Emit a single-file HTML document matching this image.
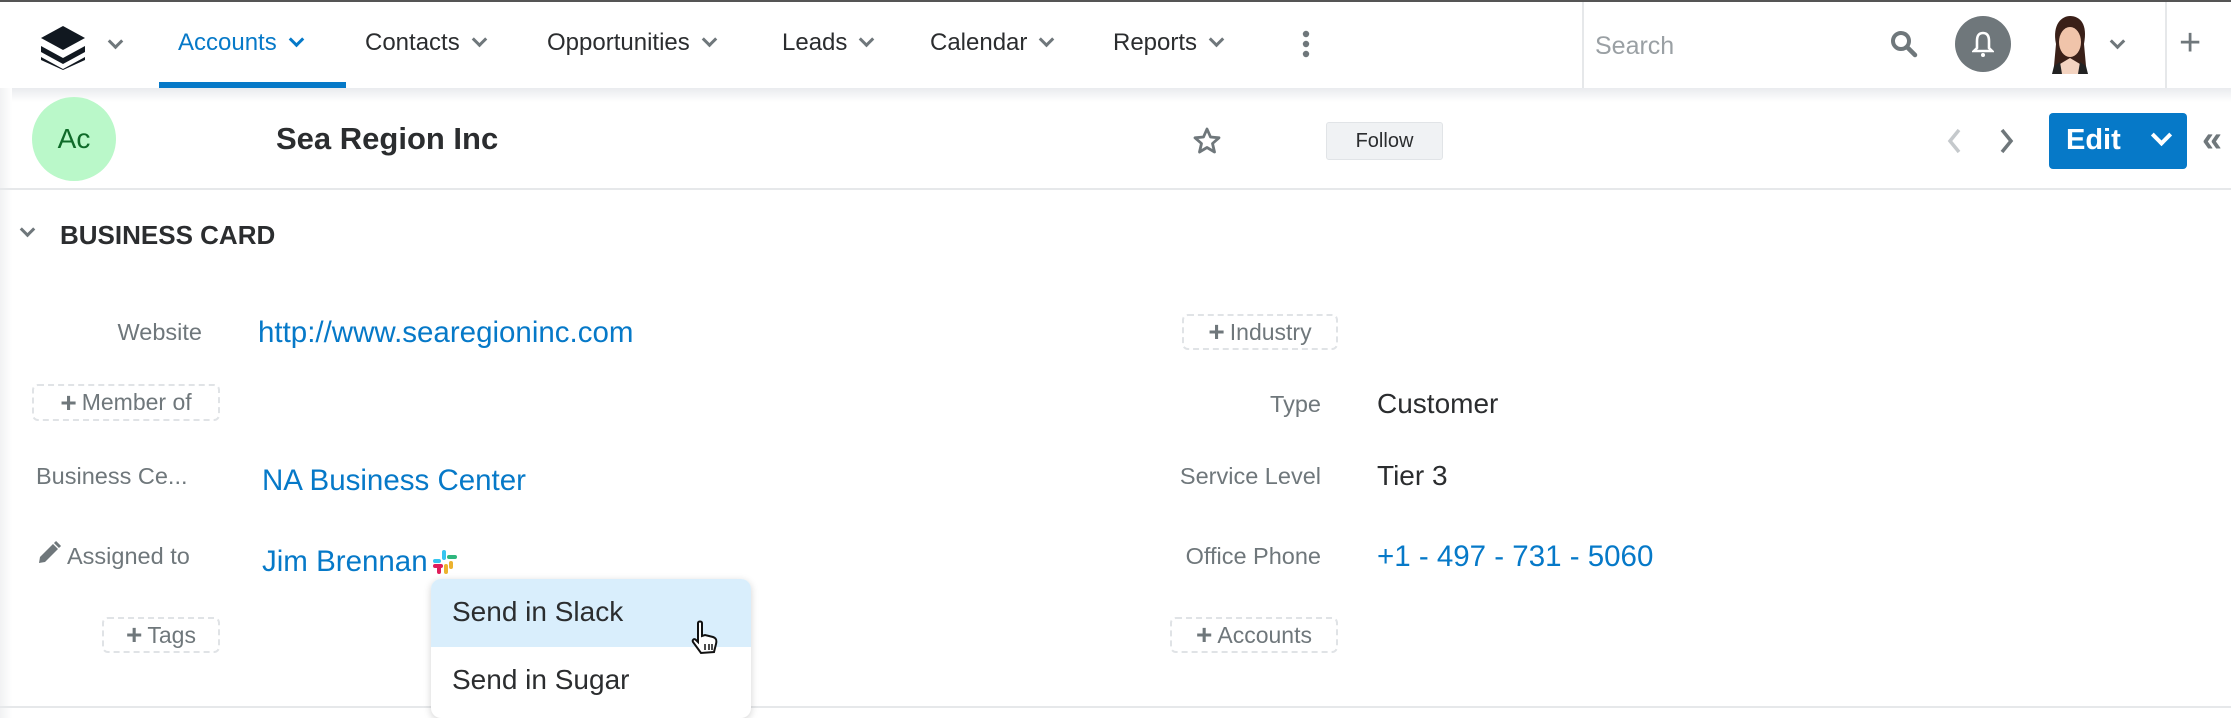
<!DOCTYPE html>
<html><head><meta charset="utf-8"><style>
*{margin:0;padding:0;box-sizing:border-box}
body{width:2231px;height:718px;overflow:hidden;background:#fff;font-family:"Liberation Sans",sans-serif;position:relative}
.a{position:absolute;white-space:nowrap}
.nav{font-size:24px;color:#2b2d2f;top:29px}
.chev{display:inline-block;width:11px;height:11px;border-right:3px solid #6f777b;border-bottom:3px solid #6f777b;transform:rotate(45deg);margin-left:14px;position:relative;top:-5px}
.chev.a{position:absolute;margin:0}
.lbl{font-size:23.5px;color:#6f777b;text-align:right}
.val{font-size:28px;color:#2b2d2f}
.lnk{font-size:29.5px;color:#0679c8}
.dash{border:2px dashed #e0e3e6;border-radius:6px;font-size:23px;color:#6f777b;display:flex;align-items:center;justify-content:center}
.dash b{font-size:28px;margin-right:5px;font-weight:bold}
</style></head><body>
<div class="a" style="left:0;top:0;width:2231px;height:2px;background:#555"></div>
<div class="a" style="left:0;top:88px;width:2231px;height:14px;background:linear-gradient(#e9ebee,#fff)"></div>
<div class="a" style="left:0;top:88px;width:12px;height:630px;background:linear-gradient(90deg,#f1f2f3,#fff)"></div>
<!-- logo -->
<svg class="a" style="left:38px;top:24px" width="50" height="46" viewBox="0 0 50 46"><path d="M25 2 L47 14 L25 26 L3 14Z" fill="#111820"/><path d="M3 22 L25 34 L47 22 L47 28 L25 40 L3 28Z" fill="#111820"/><path d="M3 33 L25 45 L47 33 L47 36 L25 46 L3 36Z" fill="#111820"/></svg>
<span class="a chev" style="left:110px;top:36px"></span>
<div class="a nav" style="left:178px;color:#0679c8">Accounts<span class="chev" style="border-color:#0679c8"></span></div>
<div class="a" style="left:159px;top:82px;width:187px;height:6px;background:#0679c8"></div>
<div class="a nav" style="left:365px">Contacts<span class="chev"></span></div>
<div class="a nav" style="left:547px">Opportunities<span class="chev"></span></div>
<div class="a nav" style="left:782px">Leads<span class="chev"></span></div>
<div class="a nav" style="left:930px">Calendar<span class="chev"></span></div>
<div class="a nav" style="left:1113px">Reports<span class="chev"></span></div>
<svg class="a" style="left:1300px;top:30px" width="12" height="28"><circle cx="6" cy="4" r="3.2" fill="#6f777b"/><circle cx="6" cy="14" r="3.2" fill="#6f777b"/><circle cx="6" cy="24" r="3.2" fill="#6f777b"/></svg>
<div class="a" style="left:1582px;top:2px;width:2px;height:86px;background:#e6e8ea"></div>
<div class="a" style="left:1595px;top:32px;font-size:25px;color:#9aa0a4">Search</div>
<svg class="a" style="left:1890px;top:30px" width="28" height="28" viewBox="0 0 28 28"><circle cx="11" cy="11" r="8" fill="none" stroke="#6f777b" stroke-width="4"/><path d="M17 17 L25 25" stroke="#6f777b" stroke-width="4.5" stroke-linecap="round"/></svg>
<div class="a" style="left:1955px;top:16px;width:56px;height:56px;border-radius:50%;background:#6f777b"></div>
<svg class="a" style="left:1972px;top:30px" width="22" height="28" viewBox="0 0 22 28"><path d="M11 3 C6 3 5 7 5 11 L5 18 L2 21 L20 21 L17 18 L17 11 C17 7 16 3 11 3Z" fill="none" stroke="#fff" stroke-width="2.6"/><circle cx="11" cy="25" r="2" fill="#fff"/></svg>
<svg class="a" style="left:2046px;top:14px" width="48" height="60" viewBox="0 0 48 60"><path d="M10 30 C6 10 16 2 24 2 C34 2 42 10 38 30 L40 52 L8 52Z" fill="#3a2018"/><ellipse cx="24" cy="28" rx="11" ry="15" fill="#f0c4aa"/><path d="M14 50 L24 44 L34 50 L36 60 L12 60Z" fill="#f3d3c0"/><path d="M8 52 L14 48 L16 60 L6 60Z M40 52 L34 48 L32 60 L42 60Z" fill="#222"/></svg>
<span class="a chev" style="left:2112px;top:36px"></span>
<div class="a" style="left:2165px;top:2px;width:2px;height:86px;background:#e6e8ea"></div>
<div class="a" style="left:2179px;top:22px;font-size:38px;color:#6f777b">+</div>
<!-- header -->
<div class="a" style="left:32px;top:97px;width:84px;height:84px;border-radius:50%;background:#baf8c9;color:#0f6b29;font-size:28px;line-height:84px;text-align:center">Ac</div>
<div class="a" style="left:276px;top:121px;font-size:31px;font-weight:bold;color:#2b2d2f">Sea Region Inc</div>
<svg class="a" style="left:1192px;top:126px" width="30" height="30" viewBox="0 0 30 30"><path d="M15 3 L18.5 11 L27 11.8 L20.5 17.5 L22.5 26 L15 21.5 L7.5 26 L9.5 17.5 L3 11.8 L11.5 11Z" fill="none" stroke="#6f777b" stroke-width="2.8" stroke-linejoin="round"/></svg>
<div class="a" style="left:1326px;top:122px;width:117px;height:38px;background:#f0f2f4;border:1px solid #e1e4e7;border-radius:3px;font-size:20px;color:#2b2d2f;text-align:center;line-height:36px">Follow</div>
<svg class="a" style="left:1944px;top:126px" width="20" height="30"><path d="M15 4 L6 15 L15 26" fill="none" stroke="#c5c9cc" stroke-width="3.5"/></svg>
<svg class="a" style="left:1997px;top:126px" width="20" height="30"><path d="M5 4 L14 15 L5 26" fill="none" stroke="#6f777b" stroke-width="3.5"/></svg>
<div class="a" style="left:2049px;top:113px;width:138px;height:56px;background:#0679c8;border-radius:4px"></div>
<div class="a" style="left:2066px;top:124px;font-size:29px;font-weight:bold;color:#fff">Edit</div>
<span class="a chev" style="left:2154px;top:128px;border-color:#fff;border-width:4px;width:15px;height:15px"></span>
<div class="a" style="left:2202px;top:118px;font-size:36px;font-weight:bold;color:#6f777b">«</div>
<div class="a" style="left:0;top:188px;width:2231px;height:2px;background:#e6e8ea"></div>
<!-- business card -->
<span class="a chev" style="left:22px;top:224px;width:11px;height:11px"></span>
<div class="a" style="left:60px;top:220px;font-size:26px;font-weight:bold;color:#2b2d2f">BUSINESS CARD</div>
<div class="a lbl" style="right:2029px;top:319px">Website</div>
<div class="a lnk" style="left:258px;top:316px">http://www.searegioninc.com</div>
<div class="a dash" style="left:1182px;top:314px;width:156px;height:36px"><b>+</b>Industry</div>
<div class="a dash" style="left:32px;top:384px;width:188px;height:37px"><b>+</b>Member of</div>
<div class="a lbl" style="right:910px;top:391px">Type</div>
<div class="a val" style="left:1377px;top:388px">Customer</div>
<div class="a lbl" style="left:36px;top:463px">Business Ce...</div>
<div class="a lnk" style="left:262px;top:464px">NA Business Center</div>
<div class="a lbl" style="right:910px;top:463px">Service Level</div>
<div class="a val" style="left:1377px;top:460px">Tier 3</div>
<svg class="a" style="left:36px;top:540px" width="26" height="26" viewBox="0 0 26 26"><path d="M3 23 L4 17 L17 4 L22 9 L9 22Z" fill="#6f777b"/><path d="M19 2 L24 7" stroke="#6f777b" stroke-width="3"/></svg>
<div class="a lbl" style="left:67px;top:543px">Assigned to</div>
<div class="a lnk" style="left:262px;top:545px">Jim Brennan</div>
<svg class="a" style="left:432px;top:549px" width="26" height="26" viewBox="0 0 26 26"><rect x="10" y="1" width="4" height="10" rx="2" fill="#36c5f0"/><rect x="15" y="6" width="10" height="4" rx="2" fill="#2eb67d"/><rect x="1" y="15" width="10" height="4" rx="2" fill="#e01e5a"/><rect x="12" y="15" width="4" height="10" rx="2" fill="#ecb22e"/><rect x="1" y="10" width="8" height="4" rx="2" fill="#36c5f0"/><rect x="17" y="12" width="4" height="8" rx="2" fill="#ecb22e"/><rect x="5" y="17" width="4" height="8" rx="2" fill="#e01e5a"/></svg>
<div class="a lbl" style="right:910px;top:543px">Office Phone</div>
<div class="a lnk" style="left:1377px;top:540px">+1 - 497 - 731 - 5060</div>
<div class="a dash" style="left:102px;top:617px;width:118px;height:36px"><b>+</b>Tags</div>
<div class="a dash" style="left:1170px;top:617px;width:168px;height:36px"><b>+</b>Accounts</div>
<div class="a" style="left:0;top:706px;width:2231px;height:2px;background:#e6e8ea"></div>
<!-- dropdown -->
<div class="a" style="left:431px;top:579px;width:320px;height:139px;background:#fff;border-radius:10px;box-shadow:0 2px 8px rgba(0,0,0,.18);overflow:hidden">
<div style="height:68px;background:#d9eefc"></div></div>
<div class="a" style="left:452px;top:596px;font-size:28px;color:#2b2d2f">Send in Slack</div>
<div class="a" style="left:452px;top:664px;font-size:28px;color:#2b2d2f">Send in Sugar</div>
<svg class="a" style="left:690px;top:620px" width="30" height="38" viewBox="0 0 30 38"><path d="M8 3 C8 1 12 1 12 3 L12 16 L15 15 L19 16 L23 17 C26 18 27 20 26 24 L24 32 L11 33 L3 22 C2 20 4 18 6 20 L8 22Z" fill="#fff" stroke="#111" stroke-width="2"/><path d="M15 24 V30 M19 24 V30 M22 24 V30" stroke="#111" stroke-width="1.5"/></svg>
</body></html>
